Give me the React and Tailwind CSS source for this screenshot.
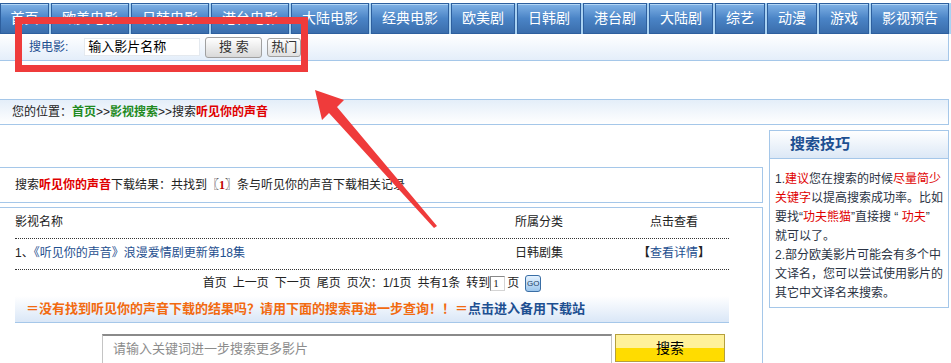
const tabs = [
  ['首页', 'w-[49px]'],
  ['欧美电影', 'w-[78px]'],
  ['日韩电影', 'w-[78px]'],
  ['港台电影', 'w-[78px]'],
  ['大陆电影', 'w-[78px]'],
  ['经典电影', 'w-[78px]'],
  ['欧美剧', 'w-[64px]'],
  ['日韩剧', 'w-[64px]'],
  ['港台剧', 'w-[64px]'],
  ['大陆剧', 'w-[64px]'],
  ['综艺', 'w-[50px]'],
  ['动漫', 'w-[50px]'],
  ['游戏', 'w-[50px]'],
  ['影视预告', 'w-[78px]'],
]

function NavBar() {
  return (
    <div className="pt-[3px] h-[34px]">
      <div className="flex gap-[2px] bg-[#a9d2f2] h-[31px] w-[951px]">
        {tabs.map(([t, w]) => (
          <div
            key={t}
            className={`${w} shrink-0 h-[31px] flex items-center justify-center text-[14px] text-white border border-[#2d5f9e] bg-linear-to-b from-[#80b2e6] via-[#4a84c6] to-[#3a6dac] shadow-[inset_0_1px_0_#b3d6f5]`}
          >
            {t}
          </div>
        ))}
      </div>
    </div>
  )
}

function SearchStrip() {
  return (
    <div className="h-[27px] w-[949px] border-b border-r border-[#a5c7e9] bg-linear-to-b from-white to-[#e4eefa] flex items-center">
      <span className="ml-[29px] text-[12px] text-[#1d4f91]">搜电影:</span>
      <div className="ml-[16px] w-[116px] h-[18px] bg-white border border-[#e4e9ef] text-[13px] leading-[16px] pl-[3px] text-black">输入影片名称</div>
      <div className="ml-[5px] w-[57px] h-[21px] rounded-[3px] border border-[#a0a0a0] bg-linear-to-b from-white to-[#d9d9d9] text-[13px] text-[#333] flex items-center justify-center">搜 索</div>
      <div className="ml-[5px] w-[34px] h-[19px] rounded-[3px] border border-[#a0a0a0] bg-linear-to-b from-white to-[#e0e0e0] text-[13px] text-[#333] flex items-center pl-[3px]">热门</div>
    </div>
  )
}

function Breadcrumb() {
  return (
    <div className="mt-[38px] h-[26px] w-[949px] border-y border-r border-[#a5c7e9] bg-linear-to-b from-[#e4eef9] to-white flex items-center pl-[12px] text-[12px] text-[#222]">
      您的位置：
      <span className="font-bold text-[#218a21]">首页</span>
      <span>&gt;&gt;</span>
      <span className="font-bold text-[#218a21]">影视搜索</span>
      <span>&gt;&gt;搜索</span>
      <span className="font-bold text-[#e00000]">听见你的声音</span>
    </div>
  )
}

function Sidebar() {
  const red = 'text-[#e00000]'
  return (
    <div className="ml-[6px] mt-[5px] w-[180px] border border-[#a5c7e9] self-start">
      <div className="h-[28px] border-b border-[#a5c7e9] bg-linear-to-b from-white to-[#dce8f6] flex items-center pl-[20px] text-[15px] font-bold text-[#1d4f91]">
        搜索技巧
      </div>
      <div className="pt-[11px] pb-[4px] pl-[5px] text-[12px] leading-[19px] text-[#2a3344] whitespace-nowrap">
        <div>1.<span className={red}>建议</span>您在搜索的时候<span className={red}>尽量简少</span></div>
        <div><span className={red}>关键字</span>以提高搜索成功率。比如</div>
        <div>要找“<span className={red}>功夫熊猫</span>”直接搜 “ <span className={red}>功夫</span>”</div>
        <div>就可以了。</div>
        <div>2.部分欧美影片可能会有多个中</div>
        <div>文译名，您可以尝试使用影片的</div>
        <div>其它中文译名来搜索。</div>
      </div>
    </div>
  )
}

function Results() {
  return (
    <div className="w-[763px]">
      <div className="mt-[42px] h-[36px] border-y border-r border-[#a5c7e9] flex items-center pl-[15px] text-[12px] text-[#222]">
        搜索<span className="font-bold text-[#e00000]">听见你的声音</span>下载结果：共找到〖<span className="font-bold text-[#c00000] font-['Liberation_Serif',serif]">1</span>〗条与听见你的声音下载相关记录
      </div>
      <div className="mt-[4px] h-[160px] border-t border-r border-[#a5c7e9] pt-[1px] pl-[15px] pr-[33px] text-[12px] text-[#222]">
        <div className="grid grid-cols-[1fr_160px_110px] h-[30px] leading-[27px] border-b border-dotted border-[#333]">
          <div>影视名称</div>
          <div className="text-center">所属分类</div>
          <div className="text-center">点击查看</div>
        </div>
        <div className="grid grid-cols-[1fr_160px_110px] h-[31px] leading-[29px] border-b border-dotted border-[#333]">
          <div>1、<span className="text-[#1e4f8f]">《听见你的声音》浪漫爱情剧更新第18集</span></div>
          <div className="text-center">日韩剧集</div>
          <div className="text-center"><span className="font-bold">【</span><span className="text-[#1e4f8f]">查看详情</span><span className="font-bold">】</span></div>
        </div>
        <div className="h-[26px] flex items-center justify-center">
          <span className="whitespace-pre">{'首页\u2002上一页\u2002下一页\u2002尾页\u2002页次：1/1页\u2002共有1条\u2002转到'}</span>
          <span className="w-[15px] h-[15px] bg-white border border-[#d4d4d4] border-t-[#888] border-l-[#888] text-[11px] leading-[13px] pl-[2px] font-['Liberation_Serif',serif]">1</span>
          <span className="ml-[2px]">页</span>
          <span className="ml-[6px] w-[16px] h-[17px] rounded-[3px] border border-[#3a6ea5] bg-linear-to-b from-[#e6f3ff] to-[#9cc6ec] text-[8px] leading-[15px] text-center text-[#1b3d66]">GO</span>
        </div>
        <div className="h-[27px] border-b border-[#a5c7e9] bg-linear-to-b from-white to-[#dae7f7] flex items-center pl-[11px] text-[13px] font-bold">
          <span className="text-[#f26a10]">＝没有找到听见你的声音下载的结果吗？请用下面的搜索再进一步查询！！＝</span>
          <span className="text-[#1d4f91]">点击进入备用下载站</span>
        </div>
        <div className="mt-[11px] flex">
          <div className="ml-[87px] w-[510px] h-[30px] border border-[#c4c4c4] border-t-2 border-t-[#8a8a8a] pl-[10px] text-[13px] leading-[26px] text-[#8c8c8c]">
            请输入关键词进一步搜索更多影片
          </div>
          <div className="ml-[3px] w-[110px] h-[28px] border border-[#b59f3d] bg-linear-to-b from-[#fff19a] from-50% to-[#ffdc00] to-50% flex items-center justify-center text-[14px] text-black">
            搜索
          </div>
        </div>
      </div>
    </div>
  )
}

export default function App() {
  return (
    <div className="relative w-[951px] h-[363px] overflow-hidden bg-white font-['Liberation_Sans','Noto_Sans_CJK_SC',sans-serif]">
      <NavBar />
      <SearchStrip />
      <Breadcrumb />
      <div className="flex">
        <Results />
        <Sidebar />
      </div>

      {/* annotation overlay */}
      <div className="absolute left-[15px] top-[17px] w-[293px] h-[55px] border-[7px] border-[#ef3b3b]" />
      <svg className="absolute left-0 top-0 pointer-events-none" width="951" height="363">
        <polygon
          points="315,90 344,100 337,107 437,226 434,228 329,113 322,120"
          fill="#ef3b3b"
        />
      </svg>
    </div>
  )
}
